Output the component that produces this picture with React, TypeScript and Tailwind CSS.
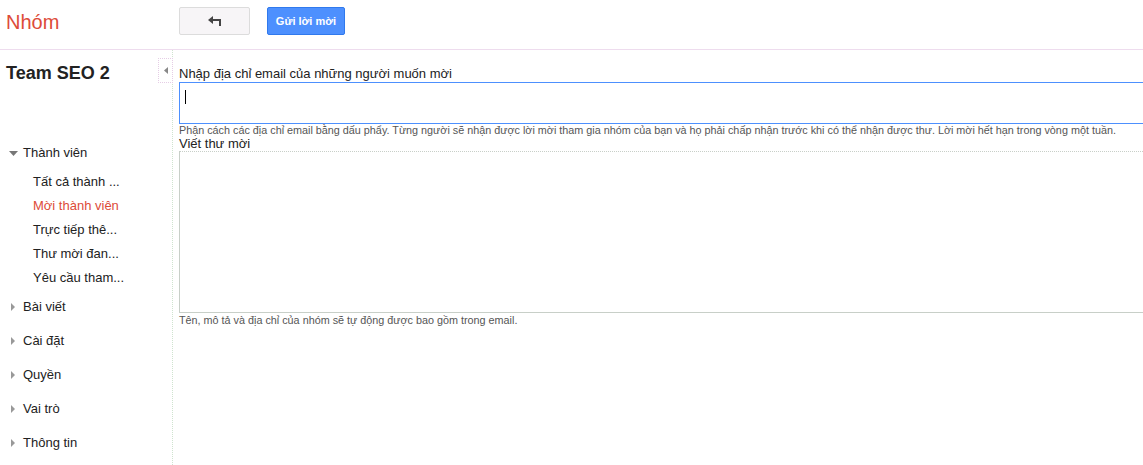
import React from 'react';

const SUB_ITEMS = [
  { label: 'Tất cả thành ...', active: false },
  { label: 'Mời thành viên', active: true },
  { label: 'Trực tiếp thê...', active: false },
  { label: 'Thư mời đan...', active: false },
  { label: 'Yêu cầu tham...', active: false },
];

const SECTIONS = ['Bài viết', 'Cài đặt', 'Quyền', 'Vai trò', 'Thông tin'];

const RightTri = () => (
  <svg width="5" height="8" viewBox="0 0 5 8" className="shrink-0">
    <path d="M0 0 L4 4 L0 8 Z" fill="#999" />
  </svg>
);

const DownTri = () => (
  <svg width="9" height="5" viewBox="0 0 9 5" className="shrink-0">
    <path d="M0 0 L9 0 L4.5 5 Z" fill="#777" />
  </svg>
);

export default function App() {
  return (
    <div className="h-[465px] w-[1143px] overflow-hidden bg-white font-['Liberation_Sans',Arial,sans-serif] text-[#222]">
      {/* top bar */}
      <div className="flex h-[50px] items-start border-b border-[#eedcee]">
        <div className="w-[179px] pl-[6px] pt-[9px] text-[20px] leading-[26px] text-[#dd4b39]">Nhóm</div>
        <div className="flex gap-[17px] pt-[7px]">
          <button className="flex h-[28px] w-[71px] items-center justify-center rounded-[2px] border border-[#dcdcdc] bg-[#f7f5f7]">
            <svg width="14" height="10" viewBox="0 0 14 10">
              <path d="M0 4 L5 0 L5 8 Z" fill="#444" />
              <path d="M4 4 H12 V10" stroke="#444" strokeWidth="2" fill="none" />
            </svg>
          </button>
          <button className="h-[28px] w-[78px] rounded-[2px] border border-[#3079ed] bg-[#4d90fe] text-[11px] font-bold text-white">
            Gửi lời mời
          </button>
        </div>
      </div>

      <div className="flex">
        {/* sidebar */}
        <div className="relative h-[415px] w-[173px] shrink-0 border-r border-dotted border-[#cfe3cf]">
          <div className="absolute right-[-1px] top-[8px] flex h-[25px] w-[15px] items-center justify-center border border-dotted border-[#e5cde5] bg-white">
            <svg width="4" height="7" viewBox="0 0 4 7">
              <path d="M4 0 L0 3.5 L4 7 Z" fill="#888" />
            </svg>
          </div>
          <div className="pl-[6px] pt-[12px] text-[18px] font-bold leading-[22px] text-[#222]">Team SEO 2</div>
          <div className="mt-[59px] flex items-center gap-[5px] pl-[9px] text-[13px] leading-[20px]">
            <DownTri />
            <span>Thành viên</span>
          </div>
          <div className="mt-[7px] flex flex-col">
            {SUB_ITEMS.map((item) => (
              <div
                key={item.label}
                className={`pl-[33px] text-[13px] leading-[24px] ${item.active ? 'text-[#dd4b39]' : 'text-[#222]'}`}
              >
                {item.label}
              </div>
            ))}
          </div>
          <div className="flex flex-col">
            {SECTIONS.map((s) => (
              <div key={s} className="flex h-[34px] items-center gap-[7px] pl-[11px] text-[13px]">
                <RightTri />
                <span>{s}</span>
              </div>
            ))}
          </div>
        </div>

        {/* main */}
        <div className="min-w-0 flex-1 pl-[6px] pt-[15px]">
          <div className="text-[13px] leading-[17px]">Nhập địa chỉ email của những người muốn mời</div>
          <div className="h-[42px] w-[1000px] border border-[#4d90fe] pl-[5px] pt-[7px]">
            <div className="h-[14px] w-px bg-black" />
          </div>
          <div className="whitespace-nowrap text-[10.8px] leading-[13px] text-[#555]">
            Phận cách các địa chỉ email bằng dấu phẩy. Từng người sẽ nhận được lời mời tham gia nhóm của bạn và họ phải chấp nhận trước khi có thể nhận được thư. Lời mời hết hạn trong vòng một tuần.
          </div>
          <div className="text-[13px] leading-[13px]">Viết thư mời</div>
          <div className="mt-[1px] h-[162px] w-[1000px] border-b border-l border-t border-[#c8cfc8]" style={{ borderTopStyle: 'dotted' }} />
          <div className="text-[10.8px] leading-[14px] text-[#555]">
            Tên, mô tả và địa chỉ của nhóm sẽ tự động được bao gồm trong email.
          </div>
        </div>
      </div>
    </div>
  );
}
